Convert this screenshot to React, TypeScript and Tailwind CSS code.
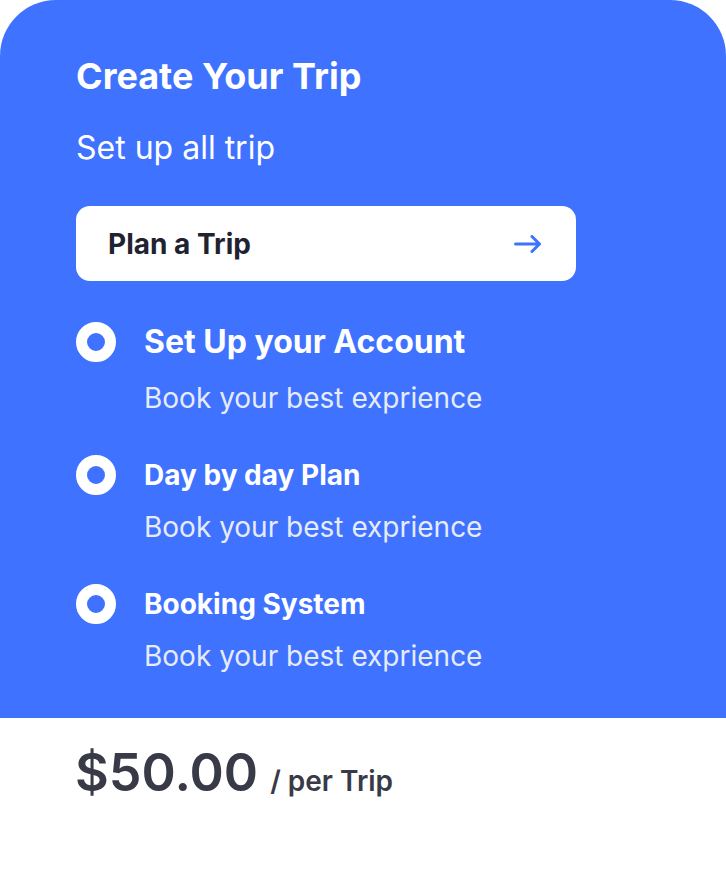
import React from "react";

//---------------------------------Data---------------------------------
const steps = [
  { title: "Set Up your Account", big: true },
  { title: "Day by day Plan", big: false },
  { title: "Booking System", big: false },
];

const Ring = () => (
  <span className="block w-10 h-10 shrink-0 rounded-full border-[11px] border-white" />
);

//---------------------------------UI---------------------------------
const App: React.FC = () => {
  return (
    <div
      className="w-[726px] h-[878px] bg-white"
      style={{ fontFamily: "Inter, 'Noto Sans', sans-serif" }}
    >
      <div className="h-[718px] bg-[#3e72ff] rounded-t-[56px] pl-[76px] pt-[54px]">
        <h1 className="text-[36px] leading-[44px] font-bold text-white">
          Create Your Trip
        </h1>
        <p className="mt-[32px] text-[32px] leading-[36px] font-normal text-white">
          Set up all trip
        </p>
        <button className="mt-[40px] w-[500px] h-[75px] bg-white rounded-[14px] flex items-center justify-between pl-[32px] pr-[34px]">
          <span className="text-[28px] font-bold text-[#1f2230]">Plan a Trip</span>
          <svg width="28" height="18" viewBox="0 0 28 18" fill="none">
            <path
              d="M1.5 9h24M18 1.5l7.5 7.5-7.5 7.5"
              stroke="#3e72ff"
              strokeWidth="3"
              strokeLinecap="round"
              strokeLinejoin="round"
            />
          </svg>
        </button>
        <div className="mt-[41px] flex flex-col">
          {steps.map((s, i) => (
            <div key={i} className={i === 0 ? "" : "mt-[41px]"}>
              <div className="flex items-center gap-[28px] h-[40px]">
                <Ring />
                <span
                  className={`font-bold text-white ${
                    s.big ? "text-[32px]" : "text-[28px]"
                  }`}
                >
                  {s.title}
                </span>
              </div>
              <p
                className={`pl-[68px] text-[28px] leading-[32px] text-[#e6ebf8] ${
                  s.big ? "mt-[20px]" : "mt-[16px]"
                }`}
              >
                Book your best exprience
              </p>
            </div>
          ))}
        </div>
      </div>
      <div className="pl-[75px] pt-[23px] flex items-baseline gap-[12px] text-[#383a47]">
        <span className="text-[52px] leading-[64px] font-semibold">$50.00</span>
        <span className="text-[28px] font-semibold">/ per Trip</span>
      </div>
    </div>
  );
};

export default App;
